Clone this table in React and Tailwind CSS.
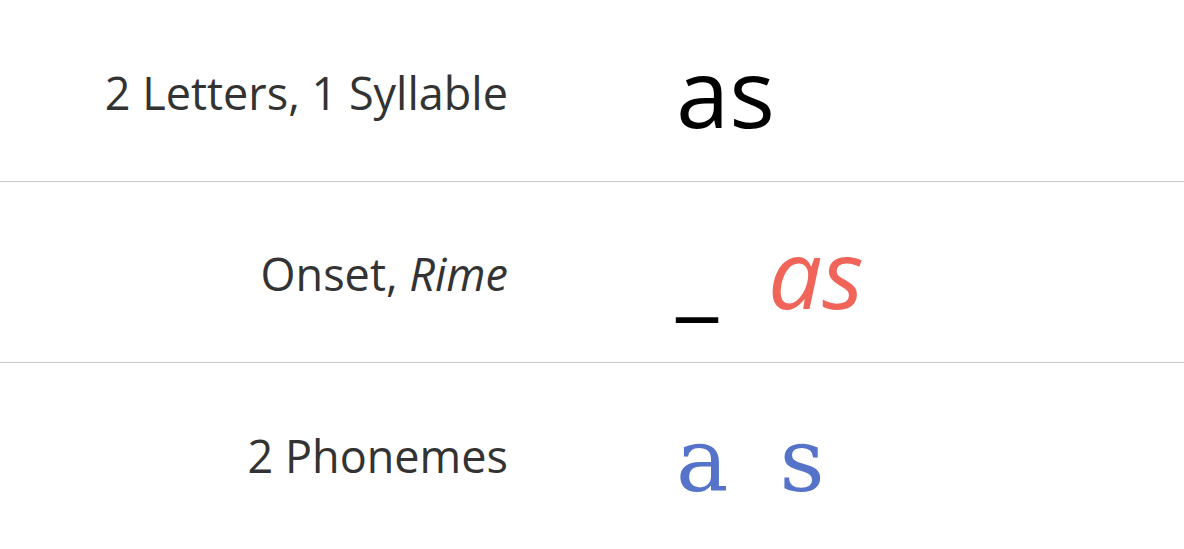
export default function App() {
  const rows = [
    {
      label: <>2 Letters, 1 Syllable</>,
      word: <span className="text-black">as</span>,
      h: "h-[182px]",
      labelPad: "pt-[4px]",
      wordPad: "",
    },
    {
      label: (
        <>
          Onset, <i>Rime</i>
        </>
      ),
      word: (
        <span className="flex gap-[50px]">
          <span className="text-black">_</span>
          <span className="italic text-[#f0645a]">as</span>
        </span>
      ),
      h: "h-[181px]",
      labelPad: "pt-[4px]",
      wordPad: "",
    },
    {
      label: <>2 Phonemes</>,
      word: (
        <span className="flex gap-[51px] font-['DejaVu_Serif',serif] text-[88px] text-[#5473c9]">
          <span>a</span>
          <span>s</span>
        </span>
      ),
      h: "h-[186px]",
      labelPad: "",
      wordPad: "pt-[10px]",
    },
  ];

  return (
    <div className="w-[1184px] h-[549px] bg-white font-['Open_Sans',sans-serif] overflow-hidden">
      {rows.map((row, i) => (
        <div
          key={i}
          className={`flex items-center ${row.h} ${i < 2 ? "border-b border-[#c8c8c8]" : ""}`}
        >
          <div className={`w-1/2 pr-[84px] text-right text-[45px] text-[#333] ${row.labelPad}`}>
            {row.label}
          </div>
          <div className={`w-1/2 pl-[84px] text-[96px] ${row.wordPad}`}>{row.word}</div>
        </div>
      ))}
    </div>
  );
}
